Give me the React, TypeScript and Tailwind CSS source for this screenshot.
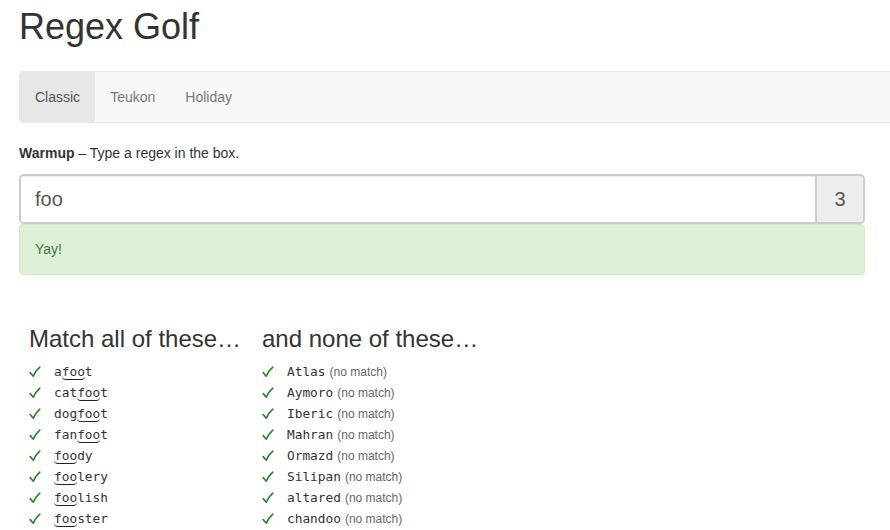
import React from "react";

const left: [string, string, string][] = [
  ["a", "foo", "t"],
  ["cat", "foo", "t"],
  ["dog", "foo", "t"],
  ["fan", "foo", "t"],
  ["", "foo", "dy"],
  ["", "foo", "lery"],
  ["", "foo", "lish"],
  ["", "foo", "ster"],
];

const right = ["Atlas", "Aymoro", "Iberic", "Mahran", "Ormazd", "Silipan", "altared", "chandoo"];

function Check() {
  return (
    <span className="w-[25px] shrink-0 flex items-center">
      <svg width="12" height="12" viewBox="0 0 12 12">
        <path d="M1.2 6.6 L4.3 10.2 Q6.5 5 10.8 1.2" fill="none" stroke="#2e852e" strokeWidth="1.7" strokeLinecap="round" strokeLinejoin="round" />
      </svg>
    </span>
  );
}

export default function App() {
  return (
    <div className="w-[890px] h-[530px] overflow-hidden bg-white text-[#333] text-[14px]" style={{ fontFamily: '"Liberation Sans", Arial, sans-serif' }}>
      <div className="pl-[19px]">
        <h1 className="text-[36px] leading-[40px] mt-[7px] mb-[24px] font-normal text-[#333]">Regex Golf</h1>

        <div className="w-[900px] h-[52px] flex items-stretch bg-[#f8f8f8] border border-[#e7e7e7] rounded-l-[4px] overflow-hidden">
          <div className="px-[15px] flex items-center bg-[#e7e7e7] text-[#555]">Classic</div>
          <div className="px-[15px] flex items-center text-[#777]">Teukon</div>
          <div className="px-[15px] flex items-center text-[#777]">Holiday</div>
        </div>

        <div className="mt-[20px] leading-[20px]">
          <b className="font-bold">Warmup</b> – Type a regex in the box.
        </div>

        <div className="mt-[11px] w-[846px] h-[50px] flex border-2 border-[#ccc] rounded-[5px] overflow-hidden">
          <div className="flex-1 flex items-center pl-[14px] text-[20px] text-[#555] bg-white shadow-[inset_0_1px_1px_rgba(0,0,0,0.075)]">foo</div>
          <div className="w-[48px] flex items-center justify-center bg-[#eee] border-l-2 border-[#ccc] text-[20px] text-[#555]">3</div>
        </div>

        <div className="w-[846px] h-[51px] flex items-center pl-[15px] bg-[#dff0d8] border border-[#d6e9c6] rounded-[4px] text-[#3c763d]">
          Yay!
        </div>

        <div className="mt-[51px] flex pl-[10px]">
          <div className="w-[233px]">
            <h3 className="text-[24px] leading-[26px] font-normal text-[#333]">Match all of these…</h3>
            <div className="mt-[9px]">
              {left.map(([a, m, b], i) => (
                <div key={i} className="h-[21px] flex items-center">
                  <Check />
                  <span className="text-[12.8px] leading-[17px] text-[#333] flex items-start" style={{ fontFamily: '"DejaVu Sans Mono", monospace' }}>
                    <span>{a}</span>
                    <span className="h-[17px] border-b border-[#222] rounded-b-[4px]">{m}</span>
                    <span>{b}</span>
                  </span>
                </div>
              ))}
            </div>
          </div>
          <div>
            <h3 className="text-[24px] leading-[26px] font-normal text-[#333]">and none of these…</h3>
            <div className="mt-[9px]">
              {right.map((w, i) => (
                <div key={i} className="h-[21px] flex items-center">
                  <Check />
                  <span className="text-[12.8px] text-[#333]" style={{ fontFamily: '"DejaVu Sans Mono", monospace' }}>{w}</span>
                  <span className="ml-[4px] text-[12px] text-[#666]">(no match)</span>
                </div>
              ))}
            </div>
          </div>
        </div>
      </div>
    </div>
  );
}
